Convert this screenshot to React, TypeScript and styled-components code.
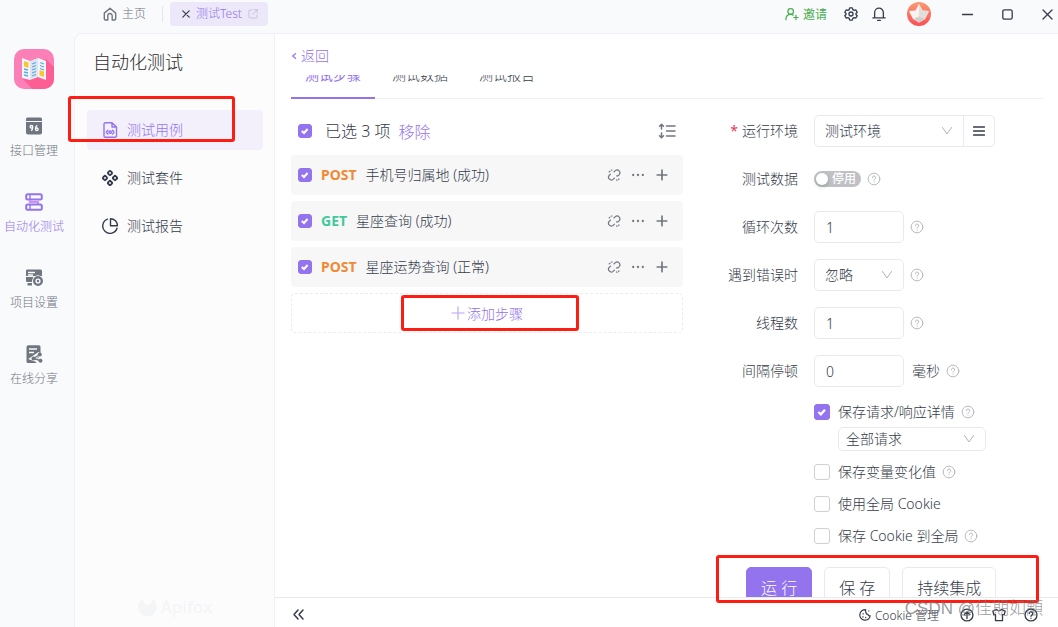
import React, { useState } from 'react';
import styled, { createGlobalStyle, css } from 'styled-components';

const c = {
  purple: '#9373ee',
  text: '#343b4a',
  muted: '#70767f',
  line: '#e9eaee',
  red: '#fd1d13',
};

const Global = createGlobalStyle`
  * { box-sizing: border-box; }
  body { margin: 0; background: #f9fafc; }
  body, button, input, select {
    font-family: "Noto Sans", "Noto Sans CJK SC", sans-serif;
    font-size: 14px;
    font-weight: 300;
    color: ${c.text};
  }
  button { margin: 0; padding: 0; border: 0; background: none; cursor: pointer; }
  input { margin: 0; }
  svg { display: block; flex: none; }
`;

const Page = styled.div`
  display: flex;
  flex-direction: column;
  height: 100vh;
  overflow: hidden;
  line-height: 22px;
`;

/* title bar */
const TitleBar = styled.header`
  flex: none;
  display: flex;
  align-items: center;
  height: 33px;
  padding: 0 5px 5px 103px;
  font-size: 12px;
`;
const HomeLink = styled.a`
  display: flex;
  align-items: center;
  gap: 5px;
  color: ${c.muted};
  text-decoration: none;
`;
const Divider = styled.span`
  width: 1px;
  height: 16px;
  margin: 0 7px 0 16px;
  background: #e4e6ea;
`;
const ProjectTab = styled.div`
  display: flex;
  align-items: center;
  height: 24px;
  padding: 0 10px 0 12px;
  gap: 6px;
  border-radius: 4px;
  background: #ece8f9;
  color: ${c.purple};
`;
const IconButton = styled.button<{ $tone?: string }>`
  display: flex;
  align-items: center;
  justify-content: center;
  color: ${(p) => p.$tone || c.text};
`;
const TitleTools = styled.div`
  display: flex;
  align-items: center;
  margin-left: auto;
  gap: 14px;
`;
const Invite = styled.button`
  display: flex;
  align-items: center;
  gap: 4px;
  margin-right: 3px;
  font-size: 12px;
  font-weight: 400;
  color: #4aae50;
`;
const AvatarButton = styled(IconButton)`
  margin-left: 7px;
`;
const WindowTools = styled.div`
  display: flex;
  align-items: center;
  gap: 29px;
  margin-left: 17px;
`;

/* left rail */
const Body = styled.div`
  flex: 1;
  min-height: 0;
  display: flex;
`;
const Rail = styled.nav`
  flex: none;
  display: flex;
  flex-direction: column;
  align-items: center;
  gap: 33px;
  width: 74px;
  padding: 16px 6px 0 0;
`;
const LogoBox = styled.div`
  height: 35px;
`;
const RailItem = styled.a<{ $active?: boolean }>`
  display: flex;
  flex-direction: column;
  align-items: center;
  gap: 7px;
  font-size: 12px;
  line-height: 18px;
  white-space: nowrap;
  text-decoration: none;
  color: ${(p) => (p.$active ? c.purple : c.muted)};
`;

/* secondary panel */
const Panel = styled.aside`
  position: relative;
  flex: none;
  display: flex;
  flex-direction: column;
  width: 201px;
  padding: 16px 11px 8px 12px;
  border: 1px solid #f0f1f4;
  border-bottom: 0;
  border-top-left-radius: 8px;
  background: #fcfcfd;
`;
const PanelTitle = styled.h1`
  margin: 0 0 36px 6px;
  font-size: 18px;
  line-height: 24px;
  font-weight: 300;
  color: #2b2b2b;
`;
const PanelItem = styled.a<{ $active?: boolean }>`
  position: relative;
  display: flex;
  align-items: center;
  gap: 9px;
  height: 40px;
  margin-bottom: 8px;
  padding-left: 15px;
  border-radius: 4px;
  text-decoration: none;
  color: ${(p) => (p.$active ? c.purple : c.text)};
  background: ${(p) => (p.$active ? '#f3f0fc' : 'transparent')};
`;
const Brand = styled.div`
  display: flex;
  align-items: center;
  justify-content: center;
  gap: 4px;
  margin-top: auto;
  font-size: 17px;
  font-weight: 500;
  line-height: 24px;
  color: #f4f5f7;
`;

/* main area */
const Main = styled.main`
  position: relative;
  flex: 1;
  min-width: 0;
  display: flex;
  flex-direction: column;
  border-top: 1px solid #f0f1f4;
  background: #fff;
`;
const BackBar = styled.div`
  flex: none;
  height: 41px;
  padding: 9px 16px;
`;
const Back = styled.a`
  display: inline-flex;
  align-items: center;
  gap: 4px;
  color: ${c.purple};
  text-decoration: none;
`;
const TabStrip = styled.div`
  flex: none;
  display: flex;
  align-items: flex-end;
  gap: 3px;
  height: 24px;
  margin: 0 15px 0 16px;
  overflow: hidden;
  box-shadow: inset 0 -1px #f0f0f2;
`;
const Tab = styled.button<{ $active?: boolean }>`
  flex: none;
  height: 46px;
  padding: 0 14px;
  line-height: 22px;
  border-bottom: 2px solid ${(p) => (p.$active ? c.purple : 'transparent')};
  color: ${(p) => (p.$active ? c.purple : c.text)};
  font-weight: ${(p) => (p.$active ? 400 : 300)};
`;
const Columns = styled.div`
  flex: 1;
  min-height: 0;
  display: flex;
  overflow: hidden;
  padding: 0 16px;
`;
const Steps = styled.section`
  flex: 1;
  min-width: 0;
  display: flex;
  flex-direction: column;
  gap: 6px;
  padding-top: 8px;
`;
const StepsHeader = styled.div`
  display: flex;
  align-items: center;
  height: 42px;
  padding: 6px 7px 0;
  gap: 8px;
  font-size: 16px;
`;
const SelectAll = styled.label`
  display: flex;
  align-items: center;
  gap: 13px;
`;
const RemoveButton = styled.button`
  font-size: 16px;
  color: ${c.purple};
`;
const Step = styled.div`
  display: flex;
  align-items: center;
  height: 40px;
  padding: 0 14px 0 7px;
  border-radius: 4px;
  background: #f7f7f8;
`;
const StepLabel = styled.label`
  display: flex;
  align-items: center;
  gap: 9px;
`;
const Method = styled.span<{ $get?: boolean }>`
  font-weight: 700;
  color: ${(p) => (p.$get ? '#42c99a' : '#ef8a35')};
`;
const StepTools = styled.div`
  display: flex;
  align-items: center;
  gap: 10px;
  margin-left: auto;
`;
const AddStep = styled.button`
  position: relative;
  display: flex;
  align-items: center;
  justify-content: center;
  gap: 2px;
  height: 40px;
  border: 1px dashed #ececef;
  border-radius: 4px;
  color: ${c.purple};
`;

/* settings form */
const Form = styled.form`
  flex: none;
  width: 359px;
  padding-top: 16px;
`;
const FieldRow = styled.div`
  display: flex;
  align-items: center;
  height: 32px;
  margin-bottom: 16px;
`;
const FieldLabel = styled.label<{ $required?: boolean }>`
  width: 115px;
  margin-right: 16px;
  text-align: right;
  ${(p) =>
    p.$required &&
    css`
      &::before { content: '*'; margin-right: 4px; font-weight: 400; color: #e5395a; }
    `}
`;
const TextInput = styled.input`
  width: 90px;
  height: 32px;
  padding: 0 11px;
  border: 1px solid ${c.line};
  border-radius: 5px;
  outline: none;
  background: #fff;
`;
const SelectBox = styled.span<{ $w: number; $small?: boolean; $joined?: boolean }>`
  position: relative;
  width: ${(p) => p.$w}px;
  height: ${(p) => (p.$small ? 24 : 32)}px;
  select {
    appearance: none;
    width: 100%;
    height: 100%;
    padding: 0 ${(p) => (p.$small ? 7 : 10)}px 2px;
    border: 1px solid ${c.line};
    border-radius: ${(p) => (p.$joined ? '5px 0 0 5px' : '5px')};
    background: #fff;
    outline: none;
  }
  svg {
    position: absolute;
    right: 11px;
    top: 50%;
    transform: translateY(-50%);
    pointer-events: none;
  }
`;
const MenuButton = styled.button`
  display: flex;
  align-items: center;
  justify-content: center;
  width: 32px;
  height: 32px;
  margin-left: -1px;
  border: 1px solid ${c.line};
  border-radius: 0 5px 5px 0;
`;
const HelpBox = styled.span`
  margin-left: 6px;
`;
const Unit = styled.span`
  margin-left: 8px;
`;
const SwitchLabel = styled.label`
  display: flex;
  align-items: center;
  justify-content: space-between;
  width: 47px;
  height: 16px;
  padding: 0 5px 0 2px;
  border-radius: 8px;
  background: #bfc1c5;
  color: #fff;
  font-size: 12px;
  font-weight: 500;
  line-height: 16px;
`;
const Knob = styled.input`
  appearance: none;
  width: 12px;
  height: 12px;
  border-radius: 50%;
  background: #fff;
  box-shadow: 0 2px 4px rgba(0, 35, 11, 0.2);
`;
const Options = styled.div`
  display: flex;
  flex-direction: column;
  align-items: flex-start;
  gap: 10px;
  margin: -2px 0 20px 131px;
`;
const OptionGroup = styled.div`
  display: flex;
  flex-direction: column;
  gap: 4px;
`;
const SubField = styled.div`
  display: flex;
  padding-left: 24px;
`;
const OptionRow = styled.div`
  display: flex;
  align-items: center;
  height: 22px;
`;
const OptionLabel = styled.label`
  display: flex;
  align-items: center;
  gap: 8px;
`;
const CheckWrap = styled.span<{ $size: number }>`
  position: relative;
  display: block;
  width: ${(p) => p.$size}px;
  height: ${(p) => p.$size}px;
  input {
    appearance: none;
    display: block;
    width: 100%;
    height: 100%;
    border: 1px solid #cfd1d6;
    border-radius: 3px;
    background: #fff;
  }
  input:checked { border-color: ${c.purple}; background: ${c.purple}; }
  svg { position: absolute; inset: 0; width: 100%; height: 100%; pointer-events: none; }
`;
const Actions = styled.div`
  display: flex;
  gap: 12px;
  padding-left: 63px;
`;
const ActionButton = styled.button<{ $primary?: boolean }>`
  height: 40px;
  padding: 0 14px;
  border: 1px solid ${(p) => (p.$primary ? c.purple : c.line)};
  border-radius: 5px;
  background: ${(p) => (p.$primary ? c.purple : '#fff')};
  color: ${(p) => (p.$primary ? '#fff' : c.text)};
  font-size: 16px;
`;

/* status bar */
const Footer = styled.footer`
  flex: none;
  display: flex;
  align-items: center;
  height: 30px;
  padding: 4px 20px 0 17px;
  border-top: 1px solid ${c.line};
  font-size: 12px;
`;
const FooterTools = styled.div`
  display: flex;
  align-items: center;
  gap: 18px;
  margin-left: auto;
`;
const CookieButton = styled.button`
  display: flex;
  align-items: center;
  gap: 4px;
  margin-right: 3px;
  font-size: 12px;
`;

/* overlays */
const Mark = styled.span<{ $inset: string }>`
  position: absolute;
  inset: ${(p) => p.$inset};
  z-index: 2;
  border: 3px solid ${c.red};
  border-radius: 3px;
  pointer-events: none;
`;
const ActionsMark = styled(Mark)`
  width: 323px;
  height: 48px;
`;
const Watermark = styled.div`
  position: absolute;
  right: 15px;
  bottom: 5px;
  z-index: 3;
  font-family: "Liberation Sans", "Noto Sans CJK SC", sans-serif;
  font-size: 17px;
  line-height: 26px;
  white-space: nowrap;
  color: rgba(120, 120, 120, 0.75);
  pointer-events: none;
`;

type IconProps = { size?: number; children: React.ReactNode; w?: number; box?: number; color?: string };
const Icon = ({ size = 16, box = 16, w = 1.3, color = 'currentColor', children }: IconProps) => (
  <svg width={size} height={size} viewBox={`0 0 ${box} ${box}`} fill="none" stroke={color} strokeWidth={w} strokeLinecap="round" strokeLinejoin="round" aria-hidden="true">
    {children}
  </svg>
);

const Help = () => (
  <HelpBox>
    <Icon size={14} w={1.1} color="#b4b7bd">
      <circle cx="8" cy="8" r="6.700" />
      <path d="M6.200 6.500a1.900 1.900 0 1 1 2.700 1.700c-.6.300-.9.600-.9 1.200M8 11.400v.2" />
    </Icon>
  </HelpBox>
);

const Chevron = () => (
  <Icon size={12} box={12} w={1} color="#b0b3ba">
    <path d="M1.500 2.500 6 9l4.500-6.500" />
  </Icon>
);

const Check = ({ size = 14, on = false, label }: { size?: number; on?: boolean; label?: string }) => {
  const [checked, setChecked] = useState(on);
  return (
    <CheckWrap $size={size}>
      <input type="checkbox" aria-label={label} checked={checked} onChange={() => setChecked(!checked)} />
      {checked && (
        <svg viewBox="0 0 14 14" fill="none" stroke="#fff" strokeWidth="2">
          <path d="M3.800 7 6 9 9.600 5" />
        </svg>
      )}
    </CheckWrap>
  );
};

const AppLogo = () => (
  <svg width="40" height="40" viewBox="0 0 40 40" aria-hidden="true">
    <defs>
      <clipPath id="logo-clip"><rect width="40" height="40" rx="10" /></clipPath>
    </defs>
    <g clipPath="url(#logo-clip)">
      <rect width="40" height="40" fill="#fb80b8" />
      <path d="M32 10 44 22v22H22L8 29z" fill="#fd5f95" />
      <path d="m8 9 8 3v19l-8-2z" fill="#f4f6fb" />
      <path d="m16 12 8-3v19l-8 3z" fill="#dfe5ee" />
      <path d="m24 9 8 3v19l-8-3z" fill="#f4f6fb" />
      <path d="m10 12 4.500 1.500v5.500L10 17.500z" fill="#fbc531" />
      <path d="m25.500 21 4.500 1.500V28l-4.500-1.500z" fill="#fbc531" />
      <path d="m10 20 4 1m-4 2 4 1m-4 2 4 1m4-12 4-1.500m-4 4.500 4-1.500m-4 4.500 4-1.500m-4 4.500 4-1.500m-4 4.500 4-1.500m4-12 4 1.500m-4 1.500 4 1.500m-4 1.500 4 1.500" stroke="#5aa8ef" strokeWidth="1.300" fill="none" />
    </g>
  </svg>
);

const ApiIcon = () => (
  <svg width="18" height="18" viewBox="0 0 18 18" aria-hidden="true">
    <path d="M2.500.500h13a1.500 1.500 0 0 1 1.500 1.500v2H1V2A1.500 1.500 0 0 1 2.500.500z" fill="currentColor" />
    <path d="M1 5h16v10.500a2 2 0 0 1-2 2H3a2 2 0 0 1-2-2z" fill="currentColor" />
    <g fill="none" stroke="#fff" strokeWidth="1.300">
      <circle cx="6.400" cy="9.800" r="1.300" />
      <path d="M7.700 9.800c0 2-.3 3.200-1.500 4M12.300 8.200c-1.200.7-1.900 2-1.900 3.700" />
      <circle cx="11.800" cy="12.300" r="1.300" />
    </g>
  </svg>
);
const AutoIcon = () => (
  <svg width="18" height="18" viewBox="0 0 18 18" fill="none" aria-hidden="true">
    <path d="M5 7.500v1.500h8v2" stroke="#cf8ff0" strokeWidth="2.200" />
    <rect x="1.200" y="1.200" width="15.600" height="5.400" rx="1.500" stroke={c.purple} strokeWidth="2" />
    <rect x="1.200" y="11.400" width="15.600" height="5.400" rx="1.500" stroke={c.purple} strokeWidth="2" />
    <path d="M5 1v5M5 11.500v5" stroke={c.purple} strokeWidth="1.400" />
  </svg>
);
const SettingsIcon = () => (
  <svg width="18" height="18" viewBox="0 0 18 18" aria-hidden="true">
    <path d="M2 .500h13.500A1.500 1.500 0 0 1 17 2v5H1V2A1.500 1.500 0 0 1 2 .500zM1 8h7.500L7 13H2a1 1 0 0 1-1-1zM2.500 14H7v2.500H2.500z" fill="currentColor" />
    <path d="M3 3.500h7M3 6h5" stroke="#f9fafc" strokeWidth="1.300" />
    <circle cx="13" cy="12" r="5.800" fill="#f9fafc" />
    <circle cx="13" cy="12" r="3.800" fill="none" stroke="currentColor" strokeWidth="2.400" />
    <circle cx="13" cy="12" r="1.200" fill="currentColor" />
  </svg>
);
const ShareIcon = () => (
  <svg width="18" height="18" viewBox="0 0 18 18" aria-hidden="true">
    <path d="M3 .200h11A1.500 1.500 0 0 1 15.500 1.700v7L11 18H3a1.500 1.500 0 0 1-1.500-1.500v-14A2 2 0 0 1 3 .200z" fill="currentColor" />
    <path d="M4 4h8M4 7.500h5" stroke="#f9fafc" strokeWidth="1.400" />
    <path d="m15 8.500-7.500 5 8 3" stroke="#f9fafc" strokeWidth="4" fill="none" />
    <path d="m15 9.500-6.500 4 7 2.200" stroke="currentColor" strokeWidth="1.400" fill="none" />
    <circle cx="14.800" cy="9.500" r="2" fill="currentColor" />
    <circle cx="8.500" cy="13.500" r="2" fill="currentColor" />
    <circle cx="15.500" cy="15.800" r="2" fill="currentColor" />
  </svg>
);

const Avatar = () => (
  <svg width="24" height="24" viewBox="0 0 24 24" aria-hidden="true">
    <defs>
      <linearGradient id="avatar-bg" x1="0" y1="0" x2="0" y2="1">
        <stop offset="0" stopColor="#fd9a72" />
        <stop offset="1" stopColor="#fb4f55" />
      </linearGradient>
    </defs>
    <circle cx="12" cy="12" r="12" fill="url(#avatar-bg)" />
    <path d="m12 2 3.500 6.500 6.500.500-4 8-6 3.500L6 17 2 9l6.500-.500z" fill="#f6f3f0" />
    <path d="m12 2 3.500 6.500 6.500.500-4 8-6 3.500V12z" fill="#e2dfdb" />
    <path d="m6 17 6-2.500 6 2.500-6 3.500z" fill="#d3d0cb" />
  </svg>
);

const steps = [
  { method: 'POST', name: '手机号归属地 (成功)' },
  { method: 'GET', name: '星座查询 (成功)' },
  { method: 'POST', name: '星座运势查询 (正常)' },
];

export default function App() {
  return (
    <Page>
      <Global />
      <TitleBar>
        <HomeLink href="#home">
          <Icon size={14} w={1.600}>
            <path d="M1.500 7 8 1.500 14.500 7v6.500a1.300 1.300 0 0 1-1.300 1.300H10.500V10a2.500 2.500 0 0 0-5 0v4.800H2.800a1.300 1.300 0 0 1-1.300-1.300z" />
          </Icon>
          主页
        </HomeLink>
        <Divider />
        <ProjectTab>
          <IconButton aria-label="关闭标签">
            <Icon size={8} box={8} w={1.200}><path d="m.800.800 6.400 6.400m0-6.400L.800 7.200" /></Icon>
          </IconButton>
          测试Test
          <Icon size={10} box={10} w={1} color="#c9c4da">
            <path d="M4 1H2a1 1 0 0 0-1 1v6a1 1 0 0 0 1 1h6a1 1 0 0 0 1-1V6M6 .700h3.300V4M9 1 4.500 5.500" />
          </Icon>
        </ProjectTab>
        <TitleTools>
          <Invite>
            <Icon size={14} w={1.400}>
              <circle cx="6.500" cy="5" r="3.200" />
              <path d="M1 14.500c0-4 2.500-6 5.500-6 1.200 0 2 .3 2.800.8M12.500 9.500v5M10 12h5" />
            </Icon>
            邀请
          </Invite>
          <IconButton aria-label="设置">
            <Icon size={14} w={1.500}>
              <path d="M6.500 1h3l.6 2 1.500.9 2-.5 1.500 2.600-1.400 1.500v1l1.400 1.500-1.500 2.600-2-.5-1.500.9-.6 2h-3l-.6-2-1.500-.9-2 .5L.900 10l1.400-1.500v-1L.900 6l1.500-2.600 2 .5L5.900 3z" />
              <circle cx="8" cy="8" r="2.300" />
            </Icon>
          </IconButton>
          <IconButton aria-label="通知">
            <Icon size={14} w={1.500}>
              <path d="M1 12.500h14M3 12.500V6.300a5 5 0 0 1 10 0v6.200M6.500 15.300h3" />
            </Icon>
          </IconButton>
          <AvatarButton aria-label="账号">
            <Avatar />
          </AvatarButton>
          <WindowTools>
            <IconButton aria-label="最小化"><Icon size={11} box={11} w={1.300}><path d="M.500 5.500h10" /></Icon></IconButton>
            <IconButton aria-label="最大化"><Icon size={11} box={11} w={1.300}><rect x=".800" y=".800" width="9.400" height="9.400" rx="1.800" /></Icon></IconButton>
            <IconButton aria-label="关闭"><Icon size={11} box={11} w={1.300}><path d="m1 1 9 9m0-9-9 9" /></Icon></IconButton>
          </WindowTools>
        </TitleTools>
      </TitleBar>

      <Body>
        <Rail>
          <LogoBox><AppLogo /></LogoBox>
          <RailItem href="#api"><ApiIcon />接口管理</RailItem>
          <RailItem href="#auto" $active><AutoIcon />自动化测试</RailItem>
          <RailItem href="#settings"><SettingsIcon />项目设置</RailItem>
          <RailItem href="#share"><ShareIcon />在线分享</RailItem>
        </Rail>

        <Panel>
          <PanelTitle>自动化测试</PanelTitle>
          <PanelItem href="#cases" $active>
            <Icon w={1.400}>
              <path d="M10 .800H3.300A1.300 1.300 0 0 0 2 2.100v11.800a1.300 1.300 0 0 0 1.300 1.300h9.900a1.300 1.300 0 0 0 1.300-1.300V5zM10 .800V5h4.500" />
              <path d="m5.800 8.300-1.500 1.900 1.500 1.900M10.500 8.300l1.500 1.900-1.500 1.900" />
              <circle cx="8.150" cy="10.200" r="1.200" />
            </Icon>
            测试用例
            <Mark $inset="-14px 28px 8px -19px" />
          </PanelItem>
          <PanelItem href="#suites">
            <Icon w={1.900}>
              <rect x="6.200" y="1.200" width="3.600" height="3.600" rx="1.200" transform="rotate(45 8 3)" />
              <rect x="6.200" y="11.200" width="3.600" height="3.600" rx="1.200" transform="rotate(45 8 13)" />
              <rect x="1.200" y="6.200" width="3.600" height="3.600" rx="1.200" transform="rotate(45 3 8)" />
              <rect x="11.200" y="6.200" width="3.600" height="3.600" rx="1.200" transform="rotate(45 13 8)" />
            </Icon>
            测试套件
          </PanelItem>
          <PanelItem href="#reports">
            <Icon w={1.400}>
              <path d="M5.500 1.200a7.300 7.300 0 1 0 9.500 9M8.500.700v7h7a7 7 0 0 0-7-7z" />
            </Icon>
            测试报告
          </PanelItem>
          <Brand>
            <svg width="19" height="19" viewBox="0 0 19 19" aria-hidden="true">
              <path d="M4.500 1 6 5a4 4 0 0 0 7 0l1.500-4A9.300 9.300 0 1 1 4.500 1z" fill="currentColor" />
            </svg>
            Apifox
          </Brand>
        </Panel>

        <Main>
          <BackBar>
            <Back href="#back">
              <Icon size={6} box={6} w={1.200}><path d="M4.500.700 1.700 3l2.800 2.300" /></Icon>
              返回
            </Back>
          </BackBar>
          <TabStrip>
            <Tab $active>测试步骤</Tab>
            <Tab>测试数据</Tab>
            <Tab>测试报告</Tab>
          </TabStrip>
          <Columns>
            <Steps>
              <StepsHeader>
                <SelectAll><Check on />已选 3 项</SelectAll>
                <RemoveButton>移除</RemoveButton>
                <StepTools>
                  <IconButton aria-label="排序" $tone={c.muted}>
                    <Icon size={18} box={18} w={1.500}>
                      <path d="M3.500 2.500v4.500M1.500 4.300l2-2 2 2M3.500 11v4.500M1.500 13.700l2 2 2-2M8.500 4H17M8.500 9H17M8.500 14H17" />
                    </Icon>
                  </IconButton>
                </StepTools>
              </StepsHeader>
              {steps.map((s) => (
                <Step key={s.name}>
                  <StepLabel>
                    <Check on />
                    <Method $get={s.method === 'GET'}>{s.method}</Method>
                    {s.name}
                  </StepLabel>
                  <StepTools>
                    <IconButton aria-label="解除关联" $tone={c.muted}>
                      <Icon size={14} w={1.400}>
                        <path d="M8 4.500 9.500 3A3.200 3.200 0 0 1 14 7.500L12.500 9H11M4 7 2.500 8.500A3.200 3.200 0 0 0 7 13l1.500-1.500M2.500 4.500l1-1M5.500 2.500v-.5M11 13.500l.5.500M13.500 12.500v.5" />
                      </Icon>
                    </IconButton>
                    <IconButton aria-label="更多" $tone={c.muted}>
                      <Icon size={14} w={2.600}><path d="M2.500 8h.01M8 8h.01M13.500 8h.01" /></Icon>
                    </IconButton>
                    <IconButton aria-label="添加" $tone={c.muted}>
                      <Icon size={14} w={1.900}><path d="M8 2.500v11M2.500 8h11" /></Icon>
                    </IconButton>
                  </StepTools>
                </Step>
              ))}
              <AddStep>
                <Icon size={14} w={1.300} color="#b9a5f4"><path d="M8 1v14M1 8h14" /></Icon>
                添加步骤
                <Mark $inset="1px 103px 1px 109px" />
              </AddStep>
            </Steps>

            <Form onSubmit={(e) => e.preventDefault()}>
              <FieldRow>
                <FieldLabel htmlFor="env" $required>运行环境</FieldLabel>
                <SelectBox $w={150} $joined>
                  <select id="env"><option>测试环境</option></select>
                  <Chevron />
                </SelectBox>
                <MenuButton type="button" aria-label="管理环境">
                  <Icon size={12} box={12} w={1.500}><path d="M.500 2h11M.500 6h11M.500 10h11" /></Icon>
                </MenuButton>
              </FieldRow>
              <FieldRow>
                <FieldLabel htmlFor="data">测试数据</FieldLabel>
                <SwitchLabel><Knob id="data" type="checkbox" role="switch" />停用</SwitchLabel>
                <Help />
              </FieldRow>
              <FieldRow>
                <FieldLabel htmlFor="loops">循环次数</FieldLabel>
                <TextInput id="loops" defaultValue="1" />
                <Help />
              </FieldRow>
              <FieldRow>
                <FieldLabel htmlFor="onerror">遇到错误时</FieldLabel>
                <SelectBox $w={90}>
                  <select id="onerror"><option>忽略</option></select>
                  <Chevron />
                </SelectBox>
                <Help />
              </FieldRow>
              <FieldRow>
                <FieldLabel htmlFor="threads">线程数</FieldLabel>
                <TextInput id="threads" defaultValue="1" />
                <Help />
              </FieldRow>
              <FieldRow>
                <FieldLabel htmlFor="delay">间隔停顿</FieldLabel>
                <TextInput id="delay" defaultValue="0" />
                <Unit>毫秒</Unit>
                <Help />
              </FieldRow>
              <Options>
                <OptionGroup>
                  <OptionRow>
                    <OptionLabel><Check size={16} on />保存请求/响应详情</OptionLabel>
                    <Help />
                  </OptionRow>
                  <SubField>
                    <SelectBox $w={148} $small>
                      <select aria-label="保存范围"><option>全部请求</option></select>
                      <Chevron />
                    </SelectBox>
                  </SubField>
                </OptionGroup>
                <OptionRow>
                  <OptionLabel><Check size={16} />保存变量变化值</OptionLabel>
                  <Help />
                </OptionRow>
                <OptionRow>
                  <OptionLabel><Check size={16} />使用全局 Cookie</OptionLabel>
                </OptionRow>
                <OptionRow>
                  <OptionLabel><Check size={16} />保存 Cookie 到全局</OptionLabel>
                  <Help />
                </OptionRow>
              </Options>
              <Actions>
                <ActionButton $primary>运 行</ActionButton>
                <ActionButton type="button">保 存</ActionButton>
                <ActionButton type="button">持续集成</ActionButton>
              </Actions>
            </Form>
          </Columns>
          <Footer>
            <IconButton aria-label="收起">
              <Icon size={13} box={13} w={1.500}><path d="M6 2 2 6.500 6 11M11 2 7 6.500 11 11" /></Icon>
            </IconButton>
            <FooterTools>
              <CookieButton>
                <Icon size={12} w={1.600}>
                  <path d="M9 1a7 7 0 1 0 6 8c-2 .5-3-.5-3-2-2 0-3-1-2.500-2.500C8.500 4 8.500 2 9 1zM13 2.500v.01M5.500 6v.5M5 10.500h.5M9 11v.5" />
                </Icon>
                Cookie 管理
              </CookieButton>
              <IconButton aria-label="上传">
                <Icon size={14} w={1.500}><circle cx="8" cy="8" r="6.800" /><path d="M8 12V4.500M5 7.500l3-3 3 3" /></Icon>
              </IconButton>
              <IconButton aria-label="外观">
                <Icon size={14} w={1.500}><path d="M5.500 1.500 1 3.500 2 7.500h2v7h8v-7h2l1-4-4.500-2a2.600 2.600 0 0 1-5 0z" /></Icon>
              </IconButton>
              <IconButton aria-label="帮助">
                <Icon size={14} w={1.500}><circle cx="8" cy="8" r="6.800" /><path d="M6 6.300a2 2 0 1 1 2.900 1.800c-.6.300-.9.600-.9 1.300M8 11.600v.2" /></Icon>
              </IconButton>
            </FooterTools>
          </Footer>
          <ActionsMark $inset="auto 19px 24px auto" />
          <Watermark>CSDN @佳期如顒</Watermark>
        </Main>
      </Body>
    </Page>
  );
}
